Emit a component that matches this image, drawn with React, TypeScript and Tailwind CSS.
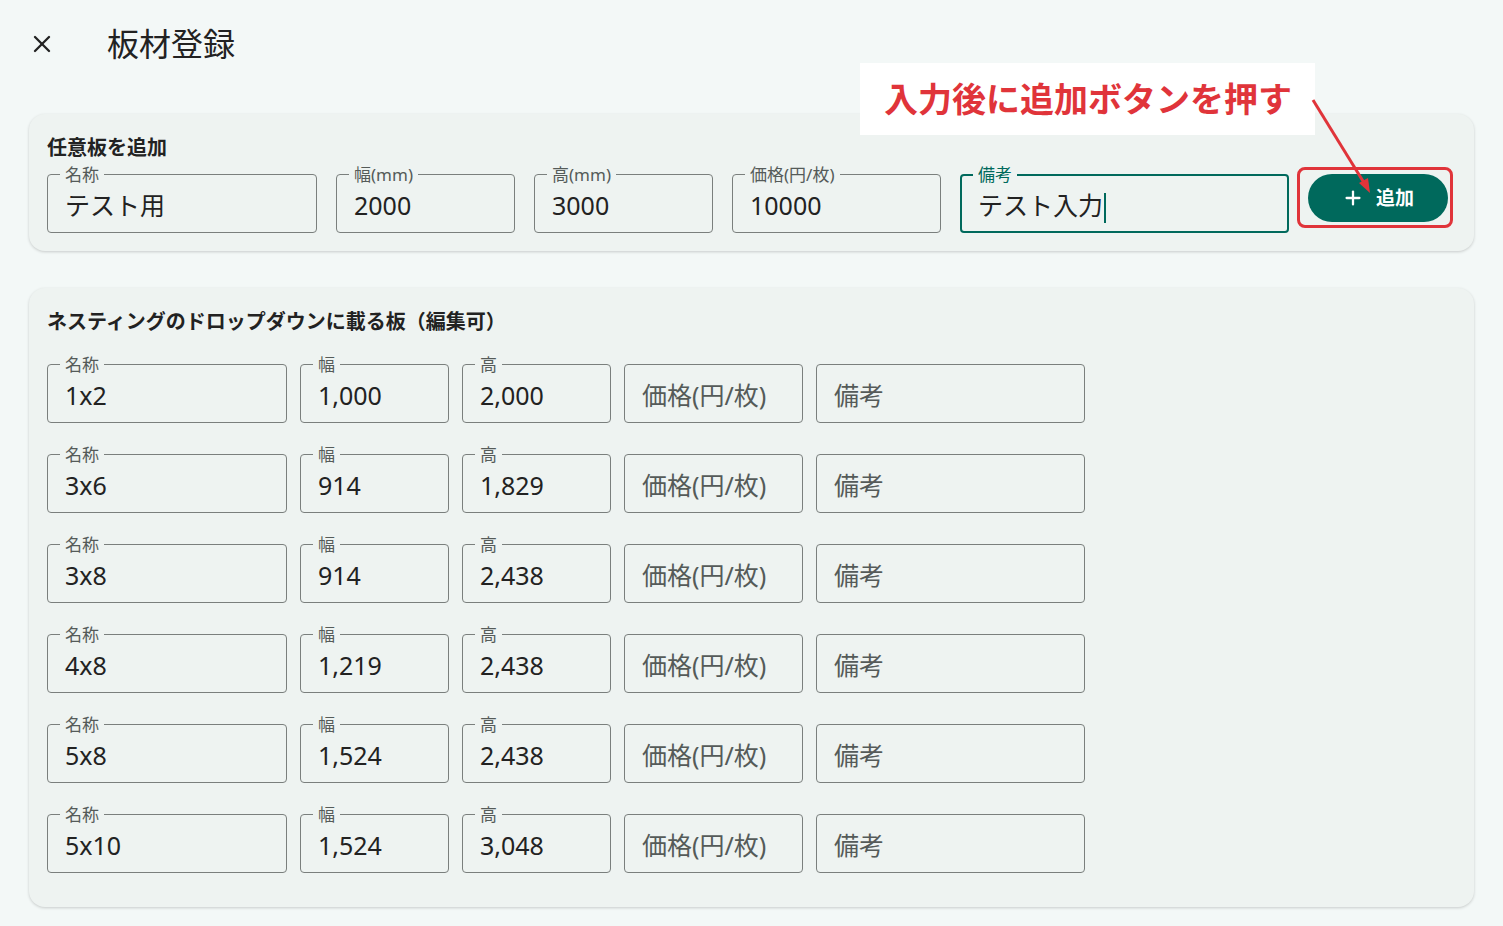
import { X, Plus } from "lucide-react";

const font = { fontFamily: '"Noto Sans", "Noto Sans CJK JP", sans-serif' };

type FieldProps = {
  label?: string;
  value?: string;
  placeholder?: string;
  width: string;
  focused?: boolean;
};

function Field({ label, value, placeholder, width, focused }: FieldProps) {
  return (
    <div className={`relative h-[59px] shrink-0 ${width}`}>
      <div
        className={`absolute inset-0 rounded-[4px] ${
          focused ? "border-2 border-[#00695c]" : "border border-[#7a7f7d]"
        }`}
      />
      {label ? (
        <div
          className={`absolute left-[13px] top-[-9px] bg-[#eef3f1] px-[5px] text-[17px] leading-[20px] ${
            focused ? "text-[#00695c]" : "text-[#555b59]"
          }`}
        >
          {label}
        </div>
      ) : null}
      <div className="absolute inset-0 flex items-center px-[18px] pt-[4px] text-[25px]">
        {value ? (
          <span className="text-[#222]">
            {value}
            {focused ? <span className="ml-[1px] inline-block h-[30px] w-[2px] bg-[#00695c] align-middle" /> : null}
          </span>
        ) : (
          <span className="text-[#555b59]">{placeholder}</span>
        )}
      </div>
    </div>
  );
}

const rows = [
  ["1x2", "1,000", "2,000"],
  ["3x6", "914", "1,829"],
  ["3x8", "914", "2,438"],
  ["4x8", "1,219", "2,438"],
  ["5x8", "1,524", "2,438"],
  ["5x10", "1,524", "3,048"],
];

export default function App() {
  return (
    <div className="relative h-[926px] w-[1503px] overflow-hidden bg-[#f3f8f7]" style={font}>
      <div className="flex h-[90px] items-center pl-[28px] pb-[2px]">
        <X className="h-[28px] w-[28px] text-[#222]" strokeWidth={2} />
        <div className="ml-[51px] text-[32px] text-[#222]">板材登録</div>
      </div>

      <div className="mx-[29px] mt-[24px] rounded-[16px] bg-[#eef3f1] px-[18px] pb-[18px] pt-[20px] shadow-[0_1px_3px_rgba(0,0,0,0.18)]">
        <div className="text-[20px] font-bold leading-[28px] text-[#222]">任意板を追加</div>
        <div className="mt-[12px] flex items-start gap-[19px]">
          <Field label="名称" value="テスト用" width="w-[270px]" />
          <Field label="幅(mm)" value="2000" width="w-[179px]" />
          <Field label="高(mm)" value="3000" width="w-[179px]" />
          <Field label="価格(円/枚)" value="10000" width="w-[209px]" />
          <Field label="備考" value="テスト入力" width="w-[329px]" focused />
          <div className="flex h-[48px] w-[140px] items-center justify-center gap-[12px] rounded-full bg-[#00695c] text-[19px] font-bold text-white">
            <Plus className="h-[22px] w-[22px]" strokeWidth={2.5} />
            <span>追加</span>
          </div>
        </div>
      </div>

      <div className="mx-[29px] mt-[37px] rounded-[16px] bg-[#eef3f1] px-[18px] pb-[34px] pt-[19px] shadow-[0_1px_3px_rgba(0,0,0,0.18)]">
        <div className="text-[20px] font-bold leading-[30px] text-[#222]">ネスティングのドロップダウンに載る板（編集可）</div>
        <div className="mt-[27px] flex flex-col gap-[31px]">
          {rows.map((r) => (
            <div key={r[0]} className="flex gap-[13px]">
              <Field label="名称" value={r[0]} width="w-[240px]" />
              <Field label="幅" value={r[1]} width="w-[149px]" />
              <Field label="高" value={r[2]} width="w-[149px]" />
              <Field placeholder="価格(円/枚)" width="w-[179px]" />
              <Field placeholder="備考" width="w-[269px]" />
            </div>
          ))}
        </div>
      </div>

      {/* annotation overlay */}
      <div className="absolute left-[860px] top-[63px] flex h-[72px] w-[455px] items-center bg-white pl-[24px] text-[34px] font-bold text-[#e0343a]">
        入力後に追加ボタンを押す
      </div>
      <div className="absolute left-[1297px] top-[167px] h-[61px] w-[156px] rounded-[8px] border-[3px] border-[#e0343a]" />
      <svg className="absolute left-0 top-0" width="1503" height="926">
        <line x1="1313" y1="100" x2="1366" y2="186" stroke="#e0343a" strokeWidth="3" />
        <polygon points="1370,193 1359,183 1368,178" fill="#e0343a" />
      </svg>
    </div>
  );
}
